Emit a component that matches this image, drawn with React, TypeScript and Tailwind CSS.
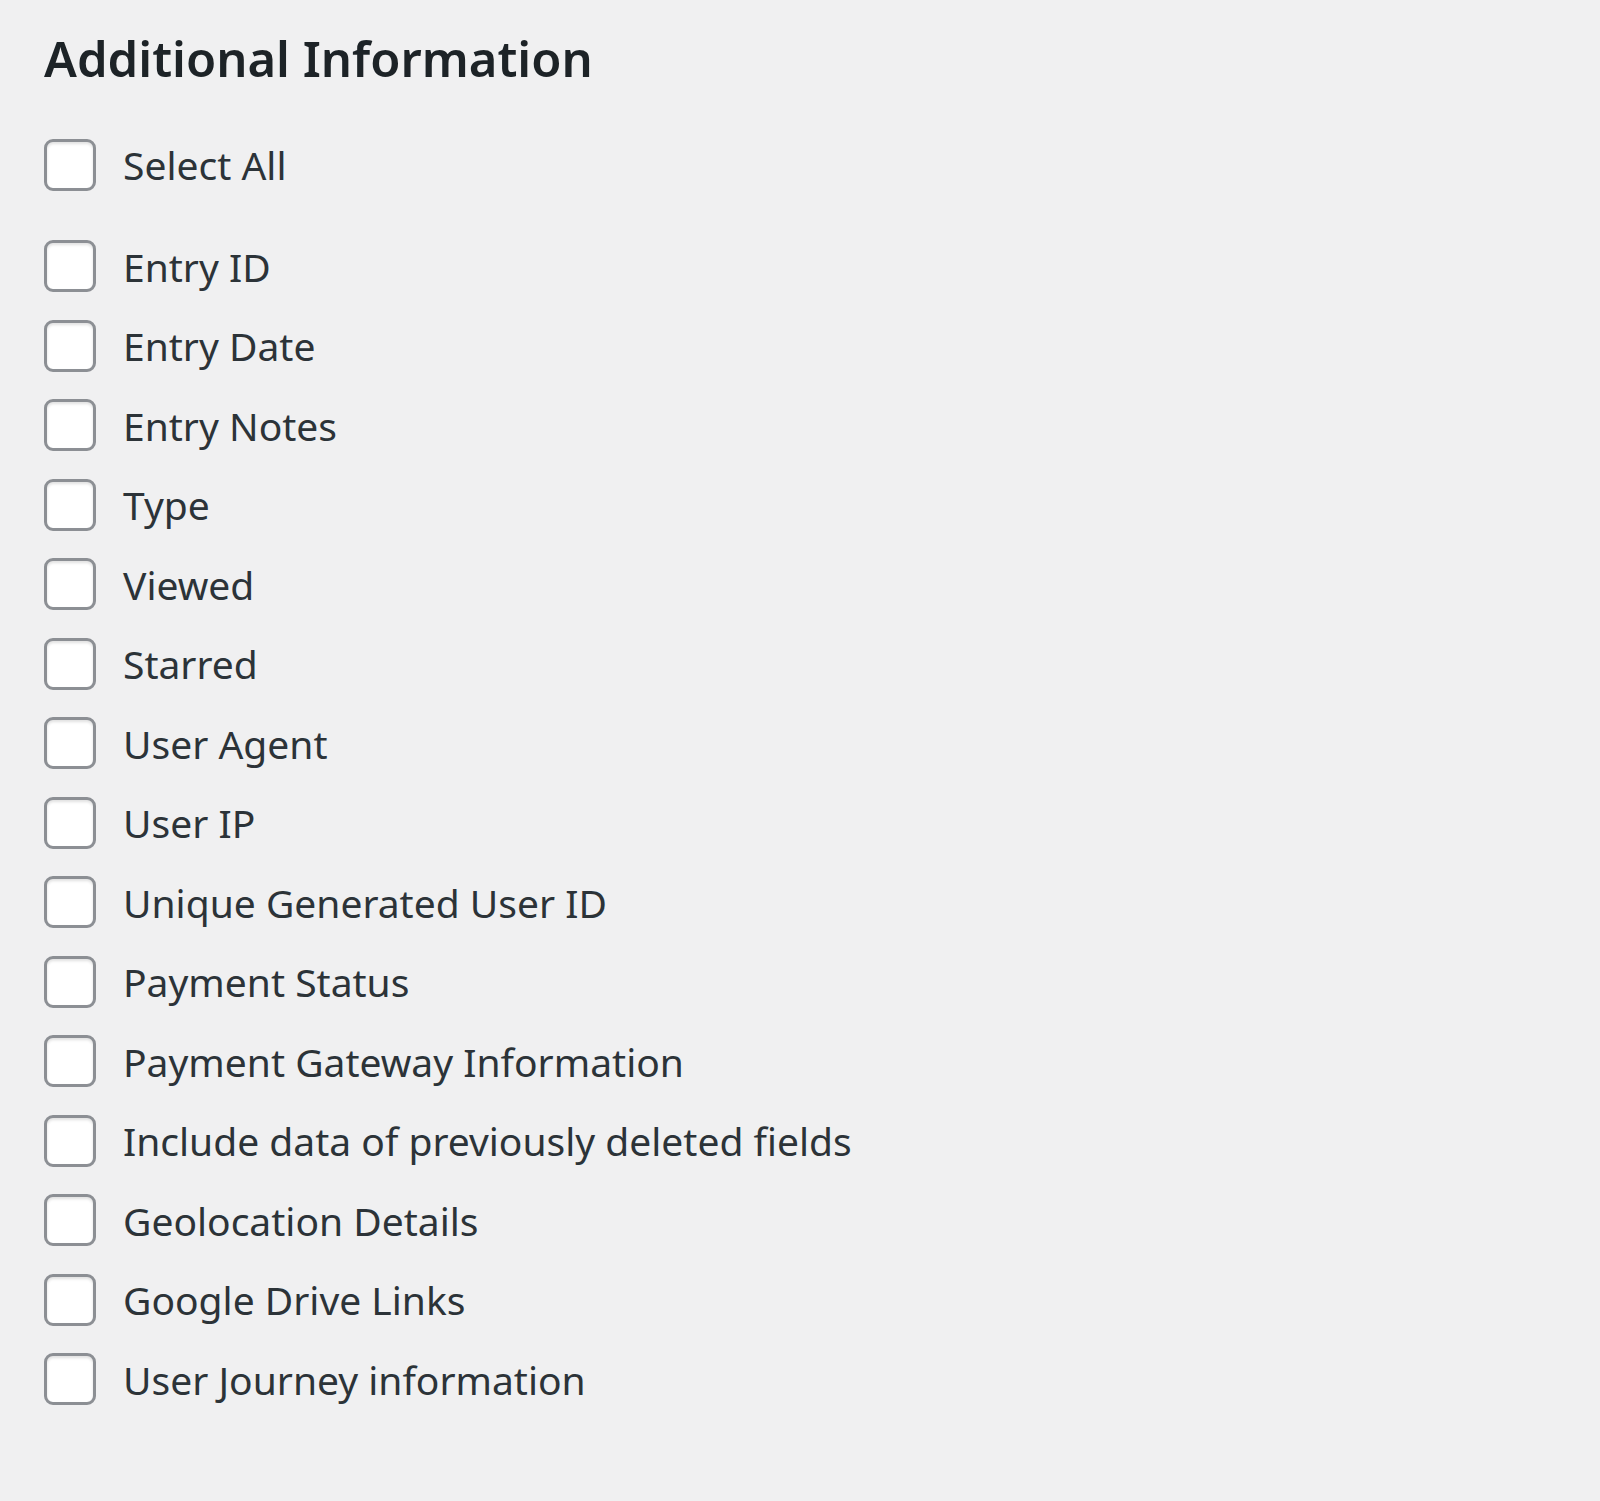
const items = [
  'Entry ID',
  'Entry Date',
  'Entry Notes',
  'Type',
  'Viewed',
  'Starred',
  'User Agent',
  'User IP',
  'Unique Generated User ID',
  'Payment Status',
  'Payment Gateway Information',
  'Include data of previously deleted fields',
  'Geolocation Details',
  'Google Drive Links',
  'User Journey information',
]

function Row({ label }: { label: string }) {
  return (
    <label className="flex items-center h-[79.5px]">
      <span className="w-[52px] h-[52px] rounded-[9px] border-[3px] border-[#8c8f94] bg-white shadow-[inset_0_2px_3px_rgba(0,0,0,0.12)] shrink-0" />
      <span className="ml-[27px] text-[39px] text-[#2c3338] leading-none">{label}</span>
    </label>
  )
}

export default function App() {
  return (
    <div className="min-h-[1501px] bg-[#f0f0f1] px-[44px] pt-[28px] font-['Noto_Sans','Open_Sans',sans-serif]">
      <h2 className="text-[49px] font-semibold text-[#1d2327] leading-[60px]">Additional Information</h2>
      <div className="mt-[37px]">
        <Row label="Select All" />
      </div>
      <div className="mt-[22px]">
        {items.map((l) => (
          <Row key={l} label={l} />
        ))}
      </div>
    </div>
  )
}
